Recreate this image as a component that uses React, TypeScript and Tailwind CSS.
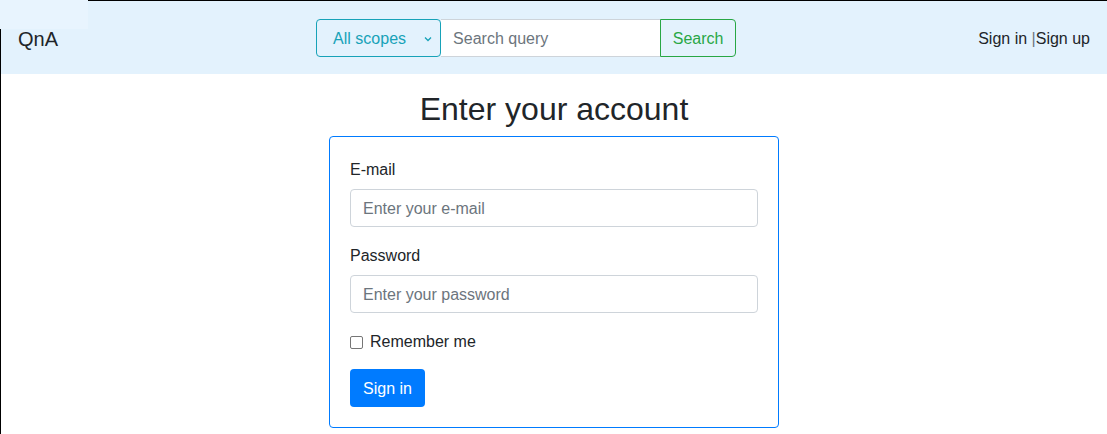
import React from "react";

const Chevron = () => (
  <svg width="8" height="6" viewBox="0 0 8 6" className="absolute right-[8px] top-[16px]">
    <path d="M1 1.5 L4 4.5 L7 1.5" fill="none" stroke="#17a2b8" strokeWidth="1.3" />
  </svg>
);

const Navbar = () => (
  <nav className="flex h-[73px] items-center bg-[#e3f2fd] pl-[17px] pr-[17px]">
    <a className="mr-4 mt-[2px] text-[20px] leading-[30px] text-[#212529]">QnA</a>
    <form className="mx-auto flex h-[38px]" onSubmit={(e) => e.preventDefault()}>
      <div className="relative flex h-[38px] w-[125px] items-center rounded border border-[#17a2b8] pl-4 pt-[2px] text-[16px] text-[#17a2b8]">
        All scopes
        <Chevron />
      </div>
      <input
        placeholder="Search query"
        className="h-[38px] w-[219px] border-y border-[#ced4da] bg-white px-3 pt-[2px] text-[16px] text-[#495057] outline-none placeholder:text-[#6c757d]"
      />
      <button className="h-[38px] w-[76px] rounded-r border border-[#28a745] pt-[2px] text-[16px] text-[#28a745]">
        Search
      </button>
    </form>
    <div className="mt-[2px] text-[16px] text-[#212529]">
      Sign in <span className="text-[#6c757d]">|</span>Sign up
    </div>
  </nav>
);

const Field = ({ label, placeholder, type }: { label: string; placeholder: string; type: string }) => (
  <div className="mb-4">
    <label className="mb-2 block pt-px leading-[23px]">{label}</label>
    <input
      type={type}
      placeholder={placeholder}
      className="block h-[38px] w-full rounded border border-[#ced4da] px-3 pt-[2px] text-[16px] outline-none placeholder:text-[#6c757d]"
    />
  </div>
);

export default function App() {
  return (
    <div
      className="relative min-h-[434px] border-l border-t border-black bg-white text-[16px] text-[#212529]"
      style={{ fontFamily: '"Liberation Sans", Arial, sans-serif' }}
    >
      <div className="absolute -left-px -top-px h-[29px] w-[88px] bg-[#e8f4fe]" />
      <Navbar />
      <main className="flex flex-col items-center">
        <h2 className="mt-[16px] mb-2 text-[32px] leading-[38px]">Enter your account</h2>
        <div className="w-[450px] rounded border border-[#007bff] p-5">
          <Field label="E-mail" placeholder="Enter your e-mail" type="email" />
          <Field label="Password" placeholder="Enter your password" type="password" />
          <div className="mb-4 flex h-6 items-center pt-[2px]">
            <span className="mr-[7px] h-[13px] w-[13px] rounded-[2px] border border-[#767676] bg-white" />
            <span>Remember me</span>
          </div>
          <button className="h-[38px] rounded bg-[#007bff] px-[13px] pt-[2px] text-white">Sign in</button>
        </div>
      </main>
    </div>
  );
}
